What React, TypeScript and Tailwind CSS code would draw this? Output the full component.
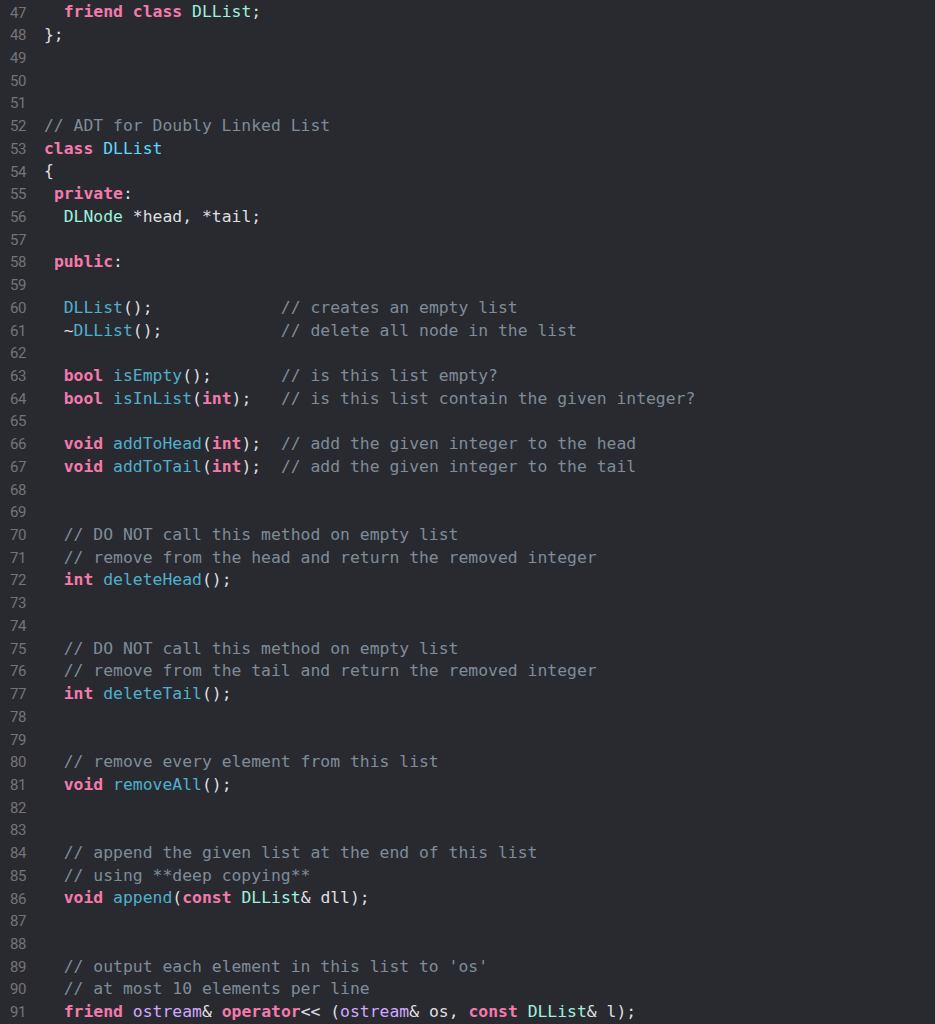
type Tok = [string, string];

const kw = (t: string): Tok => ["kw", t];
const cl = (t: string): Tok => ["cl", t];
const dc = (t: string): Tok => ["dc", t];
const fn = (t: string): Tok => ["fn", t];
const ty = (t: string): Tok => ["ty", t];
const cm = (t: string): Tok => ["cm", t];
const p = (t: string): Tok => ["p", t];

const styles: Record<string, string> = {
  kw: "text-[#f57aac] font-bold",
  cl: "text-[#9ef1dd]",
  dc: "text-[#5dd8ff]",
  fn: "text-[#4eb0cc]",
  ty: "text-[#d0a8ff]",
  cm: "text-[#7f8c98]",
  p: "text-[#dfdfe0]",
};

const lines: Tok[][] = [
  [p("  "), kw("friend"), p(" "), kw("class"), p(" "), cl("DLList"), p(";")],
  [p("};")],
  [],
  [],
  [],
  [cm("// ADT for Doubly Linked List")],
  [kw("class"), p(" "), dc("DLList")],
  [p("{")],
  [p(" "), kw("private"), p(":")],
  [p("  "), cl("DLNode"), p(" *head, *tail;")],
  [],
  [p(" "), kw("public"), p(":")],
  [],
  [p("  "), fn("DLList"), p("();             "), cm("// creates an empty list")],
  [p("  ~"), fn("DLList"), p("();            "), cm("// delete all node in the list")],
  [],
  [p("  "), kw("bool"), p(" "), fn("isEmpty"), p("();       "), cm("// is this list empty?")],
  [p("  "), kw("bool"), p(" "), fn("isInList"), p("("), kw("int"), p(");   "), cm("// is this list contain the given integer?")],
  [],
  [p("  "), kw("void"), p(" "), fn("addToHead"), p("("), kw("int"), p(");  "), cm("// add the given integer to the head")],
  [p("  "), kw("void"), p(" "), fn("addToTail"), p("("), kw("int"), p(");  "), cm("// add the given integer to the tail")],
  [],
  [],
  [p("  "), cm("// DO NOT call this method on empty list")],
  [p("  "), cm("// remove from the head and return the removed integer")],
  [p("  "), kw("int"), p(" "), fn("deleteHead"), p("();")],
  [],
  [],
  [p("  "), cm("// DO NOT call this method on empty list")],
  [p("  "), cm("// remove from the tail and return the removed integer")],
  [p("  "), kw("int"), p(" "), fn("deleteTail"), p("();")],
  [],
  [],
  [p("  "), cm("// remove every element from this list")],
  [p("  "), kw("void"), p(" "), fn("removeAll"), p("();")],
  [],
  [],
  [p("  "), cm("// append the given list at the end of this list")],
  [p("  "), cm("// using **deep copying**")],
  [p("  "), kw("void"), p(" "), fn("append"), p("("), kw("const"), p(" "), cl("DLList"), p("& dll);")],
  [],
  [],
  [p("  "), cm("// output each element in this list to 'os'")],
  [p("  "), cm("// at most 10 elements per line")],
  [
    p("  "), kw("friend"), p(" "), ty("ostream"), p("& "), kw("operator"), p("<< ("),
    ty("ostream"), p("& os, "), kw("const"), p(" "), cl("DLList"), p("& l);"),
  ],
];

export default function App() {
  return (
    <div className="w-[935px] h-[1024px] bg-[#292a30] overflow-hidden pt-[1.4px]">
      {lines.map((toks, i) => (
        <div key={i} className="flex h-[22.72px] items-center">
          <div className="w-[44px] shrink-0 pl-[10px] text-[15px] tracking-[-0.5px] text-[#747478] font-['Roboto',sans-serif]">
            {47 + i}
          </div>
          <div className="whitespace-pre text-[16.4px] font-['DejaVu_Sans_Mono',monospace]">
            {toks.map(([k, t], j) => (
              <span key={j} className={styles[k]}>
                {t}
              </span>
            ))}
          </div>
        </div>
      ))}
    </div>
  );
}
